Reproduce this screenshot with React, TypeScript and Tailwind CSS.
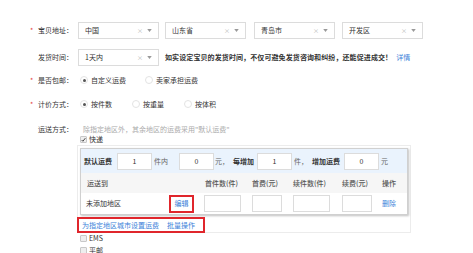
const font = { fontFamily: '"Noto Sans CJK SC", "Liberation Sans", sans-serif' };

const Star = ({ on }: { on?: boolean }) => (
  <span className="inline-block w-[6px] text-[#e4393c]">{on ? "*" : ""}</span>
);

const Label = ({ req, text }: { req?: boolean; text: string }) => (
  <div className="flex w-[78px] shrink-0 items-center pl-[30px] text-[#333]">
    <Star on={req} />
    <span className="ml-[2px]">{text}</span>
  </div>
);

const Select = ({ value }: { value: string }) => (
  <div className="flex h-[17px] w-[81px] items-center justify-between border border-[#dcdcdc] bg-white pl-[6px] pr-[6px]">
    <span className="text-[#333]">{value}</span>
    <span className="flex items-center gap-[4px] text-[#b5b5b5]">
      <span className="text-[6px]">×</span>
      <svg viewBox="0 0 6 4" className="h-[3px] w-[5px]">
        <path d="M0 0h6L3 4z" fill="#999" />
      </svg>
    </span>
  </div>
);

const Radio = ({ on }: { on?: boolean }) => (
  <span className="flex h-[8px] w-[8px] items-center justify-center rounded-full border border-[#e3e3e3] bg-white">
    {on && <span className="h-[3px] w-[3px] rounded-full bg-[#555]" />}
  </span>
);

const Check = ({ on }: { on?: boolean }) => (
  <span className="flex h-[7px] w-[7px] items-center justify-center rounded-[1px] border border-[#c8c8c8] bg-[#eee]">
    {on && (
      <svg viewBox="0 0 8 8" className="h-[6px] w-[6px]">
        <path d="M1 4l2 2 4-5" fill="none" stroke="#333" strokeWidth="1.4" />
      </svg>
    )}
  </span>
);

const Box = ({ w, v }: { w: string; v?: string }) => (
  <div
    className={`flex h-[17px] items-center justify-center border border-[#dcdcdc] bg-white text-[#333] ${w}`}
  >
    {v}
  </div>
);

export default function App() {
  return (
    <div className="h-[253px] w-[473px] overflow-hidden bg-white text-[7px] leading-none" style={font}>
      <div className="flex flex-col pt-[22px]">
        <div className="flex h-[17px] items-center">
          <Label req text="宝贝地址：" />
          <div className="flex gap-[6px]">
            <Select value="中国" />
            <Select value="山东省" />
            <div className="ml-[2px]">
              <Select value="青岛市" />
            </div>
            <div className="ml-[1px]">
              <Select value="开发区" />
            </div>
          </div>
        </div>

        <div className="mt-[10px] flex h-[17px] items-center">
          <Label text="发货时间：" />
          <Select value="1天内" />
          <span className="ml-[6px] font-semibold tracking-[0.1px] text-[#333]">
            如实设定宝贝的发货时间，不仅可避免发货咨询和纠纷，还能促进成交！
          </span>
          <span className="ml-[4px] text-[#3b7fd9]">详情</span>
        </div>

        <div className="mt-[8px] flex h-[12px] items-center">
          <Label req text="是否包邮：" />
          <div className="ml-[2px] flex items-center gap-[3px] text-[#333]">
            <Radio on />
            <span>自定义运费</span>
          </div>
          <div className="ml-[19px] flex items-center gap-[3px] text-[#333]">
            <Radio />
            <span>卖家承担运费</span>
          </div>
        </div>

        <div className="mt-[12px] flex h-[12px] items-center">
          <Label req text="计价方式：" />
          <div className="ml-[2px] flex items-center gap-[3px] text-[#333]">
            <Radio on />
            <span>按件数</span>
          </div>
          <div className="ml-[20px] flex items-center gap-[3px] text-[#333]">
            <Radio />
            <span>按重量</span>
          </div>
          <div className="ml-[20px] flex items-center gap-[3px] text-[#333]">
            <Radio />
            <span>按体积</span>
          </div>
        </div>

        <div className="mt-[13px] flex h-[12px] items-center">
          <Label text="运送方式：" />
          <span className="ml-[5px] text-[#aaa]">除指定地区外，其余地区的运费采用"默认运费"</span>
        </div>

        <div className="ml-[80px] flex h-[9px] items-center gap-[2px] text-[#333]">
          <Check on />
          <span>快递</span>
        </div>

        <div className="ml-[77px] mt-px w-[334px] border border-[#ececec]">
          <div className="m-[2px] w-[328px] border border-[#d0d0d0] shadow-[1px_1px_2px_rgba(0,0,0,0.25)]">
            <div className="flex h-[24px] items-center bg-[#eaf3fd] pl-[3px] text-[#333]">
              <span className="font-bold">默认运费</span>
              <div className="ml-[5px]">
                <Box w="w-[35px]" v="1" />
              </div>
              <span className="ml-[2px] text-[#666]">件内</span>
              <div className="ml-[11px]">
                <Box w="w-[35px]" v="0" />
              </div>
              <span className="ml-[1px] text-[#666]">元，</span>
              <span className="ml-[4px] font-bold">每增加</span>
              <div className="ml-[3px]">
                <Box w="w-[35px]" v="1" />
              </div>
              <span className="ml-[2px] text-[#666]">件，</span>
              <span className="ml-[4px] font-bold">增加运费</span>
              <div className="ml-[4px]">
                <Box w="w-[35px]" v="0" />
              </div>
              <span className="ml-[2px] text-[#666]">元</span>
            </div>

            <div className="grid h-[20px] grid-cols-[88px_32px_46px_41px_49px_40px_1fr] items-center bg-[#f6f6f6] font-medium text-[#555]">
              <span className="pl-[6px]">运送到</span>
              <span />
              <span className="pl-[4px]">首件数(件)</span>
              <span className="pl-[5px]">首费(元)</span>
              <span className="pl-[5px]">续件数(件)</span>
              <span className="pl-[5px]">续费(元)</span>
              <span className="pl-[5px]">操作</span>
            </div>

            <div className="grid h-[21px] grid-cols-[88px_32px_46px_41px_49px_40px_1fr] items-center bg-white text-[#333]">
              <span className="pl-[5px]">未添加地区</span>
              <span className="flex h-[18px] w-[25px] items-center justify-center border-2 border-[#e0262c] text-[#3b7fd9]">
                编辑
              </span>
              <div className="pl-[3px]">
                <Box w="w-[37px]" />
              </div>
              <div className="pl-[5px]">
                <Box w="w-[30px]" />
              </div>
              <div className="pl-[5px]">
                <Box w="w-[37px]" />
              </div>
              <div className="pl-[5px]">
                <Box w="w-[30px]" />
              </div>
              <span className="pl-[5px] text-[#3b7fd9]">删除</span>
            </div>
          </div>

          <div className="-mb-px -ml-px flex h-[16px] w-[128px] items-center gap-[8px] border-2 border-[#e0262c] pl-[3px] text-[#3b7fd9]">
            <span>为指定地区城市设置运费</span>
            <span>批量操作</span>
          </div>
        </div>

        <div className="ml-[80px] mt-px flex h-[9px] items-center gap-[2px] text-[#333]">
          <Check />
          <span>EMS</span>
        </div>
        <div className="ml-[80px] mt-[3px] flex h-[9px] items-center gap-[2px] text-[#333]">
          <Check />
          <span>平邮</span>
        </div>
      </div>
    </div>
  );
}
